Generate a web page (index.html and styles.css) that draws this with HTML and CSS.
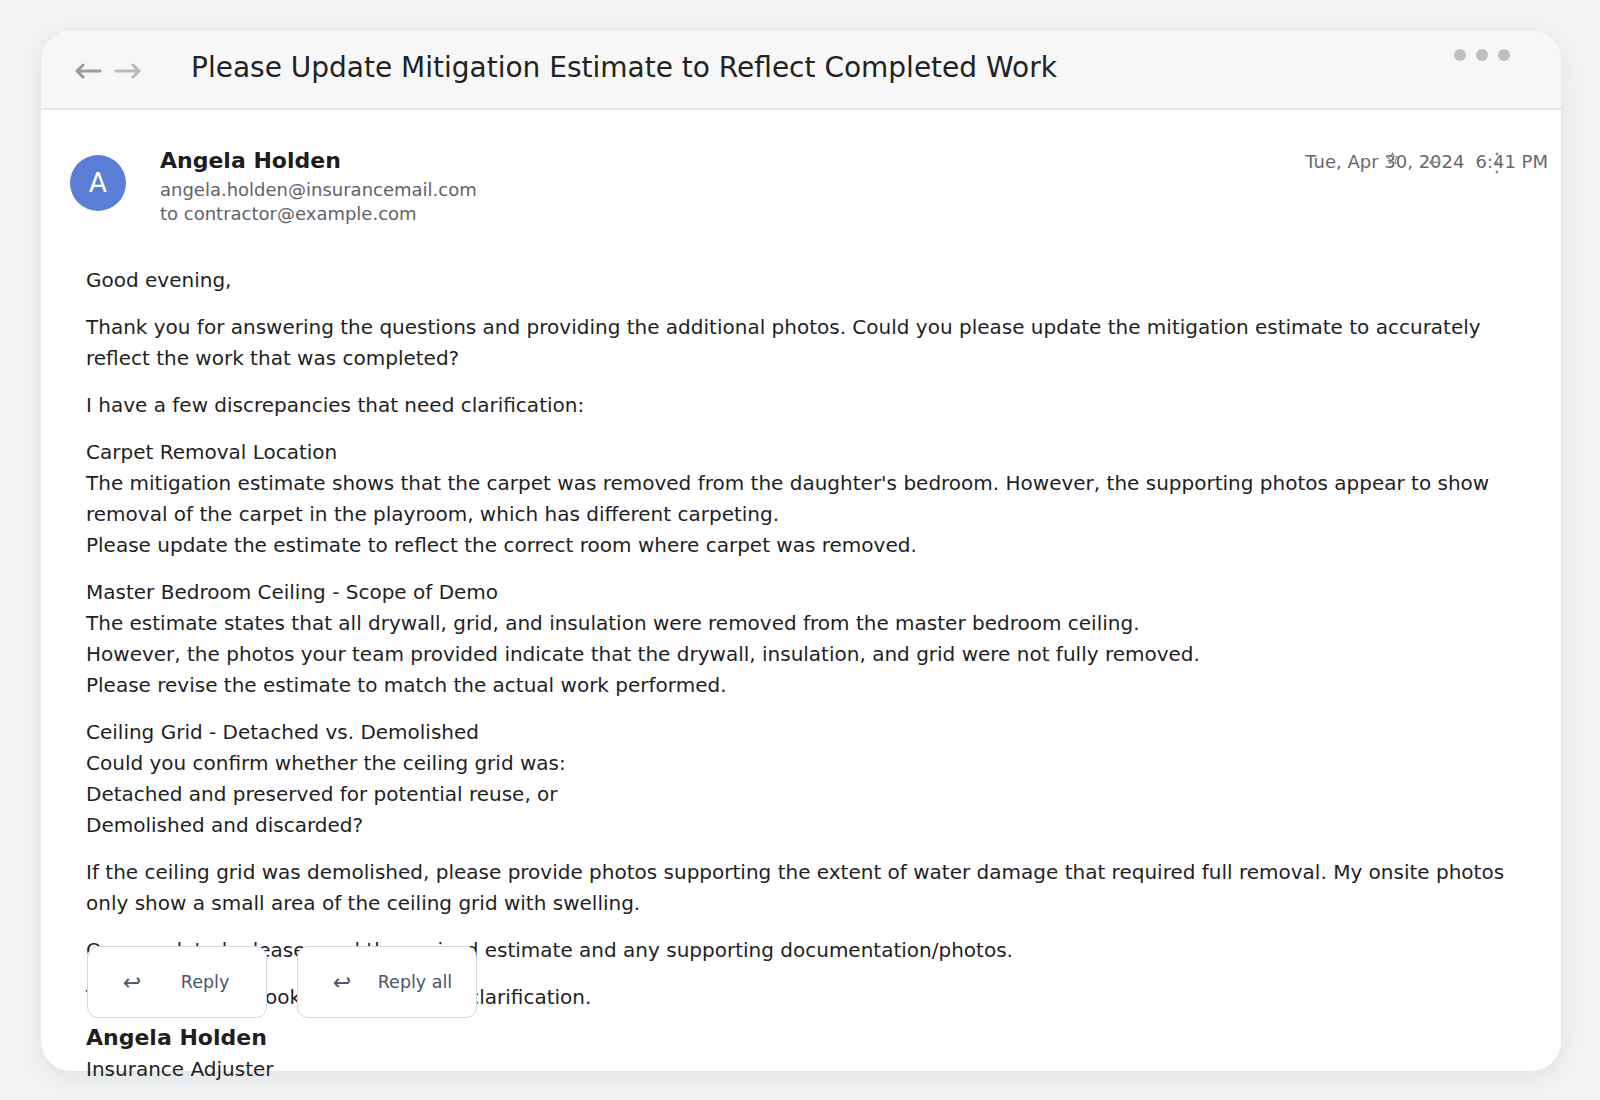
FILE: index.html
```html
<!DOCTYPE html>
<html lang="en">
<head>
<meta charset="utf-8">
<title>Please Update Mitigation Estimate to Reflect Completed Work</title>
<link rel="stylesheet" href="styles.css">
</head>
<body>
<div class="card">
  <header class="topbar">
    <div class="nav">
      <svg class="nav-arrow back" width="28" height="16" viewBox="0 0 28 16"><path d="M26 8H3M9 2L3 8l6 6" fill="none" stroke="currentColor" stroke-width="3" stroke-linecap="round" stroke-linejoin="round"/></svg>
      <svg class="nav-arrow fwd" width="28" height="16" viewBox="0 0 28 16"><path d="M2 8h23M19 2l6 6-6 6" fill="none" stroke="currentColor" stroke-width="3" stroke-linecap="round" stroke-linejoin="round"/></svg>
    </div>
    <h1 class="subject">Please Update Mitigation Estimate to Reflect Completed Work</h1>
    <div class="dots"><span></span><span></span><span></span></div>
  </header>

  <section class="sender">
    <div class="avatar">A</div>
    <div class="sender-info">
      <div class="sender-name">Angela Holden</div>
      <div class="sender-meta">angela.holden@insurancemail.com</div>
      <div class="sender-meta">to contractor@example.com</div>
    </div>
    <div class="date">Tue, Apr 30, 2024<span class="time">6:41 PM</span></div>
    <div class="msg-actions">
      <svg class="act-star" width="13" height="13" viewBox="0 0 12 12"><path d="M6 0.8l1.55 3.35 3.65.4-2.7 2.5.75 3.6L6 8.8 2.75 10.65l.75-3.6-2.7-2.5 3.65-.4z" fill="none" stroke="currentColor" stroke-width="1" stroke-linejoin="round"/></svg>
      <span class="act-reply">↩</span>
      <svg class="act-more" width="4" height="22" viewBox="0 0 4 22"><circle cx="2" cy="2" r="1.4" fill="currentColor"/><circle cx="2" cy="11" r="1.4" fill="currentColor"/><circle cx="2" cy="20" r="1.4" fill="currentColor"/></svg>
    </div>
  </section>

  <article class="message">
    <p>Good evening,</p>
    <p>Thank you for answering the questions and providing the additional photos. Could you please update the mitigation estimate to accurately reflect the work that was completed?</p>
    <p>I have a few discrepancies that need clarification:</p>
    <p>Carpet Removal Location<br>The mitigation estimate shows that the carpet was removed from the daughter's bedroom. However, the supporting photos appear to show removal of the carpet in the playroom, which has different carpeting.<br>Please update the estimate to reflect the correct room where carpet was removed.</p>
    <p>Master Bedroom Ceiling - Scope of Demo<br>The estimate states that all drywall, grid, and insulation were removed from the master bedroom ceiling.<br>However, the photos your team provided indicate that the drywall, insulation, and grid were not fully removed.<br>Please revise the estimate to match the actual work performed.</p>
    <p>Ceiling Grid - Detached vs. Demolished<br>Could you confirm whether the ceiling grid was:<br>Detached and preserved for potential reuse, or<br>Demolished and discarded?</p>
    <p>If the ceiling grid was demolished, please provide photos supporting the extent of water damage that required full removal. My onsite photos only show a small area of the ceiling grid with swelling.</p>
    <p>Once updated, please send the revised estimate and any supporting documentation/photos.</p>
    <p>Thank you, and I look forward to your clarification.</p>
    <div class="signature">
      <div class="sig-name">Angela Holden</div>
      <div class="sig-title">Insurance Adjuster</div>
    </div>
  </article>

  <div class="reply-bar">
    <button class="reply-btn"><span class="reply-icon">↩</span><span class="reply-label">Reply</span></button>
    <button class="reply-btn"><span class="reply-icon">↩</span><span class="reply-label">Reply all</span></button>
  </div>
</div>
</body>
</html>
```

FILE: styles.css
```css
* { box-sizing: border-box; }

html, body {
  margin: 0;
  background: #f1f2f4;
  font-family: "DejaVu Sans", "Noto Sans", sans-serif;
  color: #202124;
}

body {
  padding: 31px 39px 0 41px;
  height: 1100px;
  overflow: hidden;
}

.card {
  position: relative;
  width: 1520px;
  height: 1040px;
  background: #ffffff;
  border-radius: 30px;
  box-shadow: 0 6px 24px rgba(20, 25, 35, 0.07);
}

.topbar {
  display: flex;
  align-items: center;
  height: 79px;
  padding: 0 0 0 33px;
  background: #f7f7f8;
  border-bottom: 2px solid #e3e4e7;
  border-radius: 30px 30px 0 0;
}

.nav {
  display: flex;
  gap: 12px;
  margin-top: 2px;
}

.nav-arrow.back { color: #9c9c9f; }
.nav-arrow.fwd { color: #b9b9bc; }

.subject {
  margin: 0 0 5px 49px;
  font-size: 28px;
  font-weight: 400;
  color: #222222;
  flex: 1;
}

.dots {
  align-self: flex-start;
  display: flex;
  gap: 10px;
  margin: 18px 51px 0 0;
}

.dots span {
  width: 12px;
  height: 12px;
  border-radius: 50%;
  background: #bfbfc3;
}

.sender {
  position: relative;
  display: flex;
  align-items: flex-start;
  padding: 34px 13px 0 29px;
}

.avatar {
  width: 56px;
  height: 56px;
  margin-top: 11px;
  border-radius: 50%;
  background: #5a7dd6;
  color: #ffffff;
  font-size: 26px;
  display: flex;
  align-items: center;
  justify-content: center;
}

.sender-info {
  margin-left: 34px;
  flex: 1;
}

.sender-name {
  font-size: 22px;
  font-weight: 700;
  line-height: 34px;
  color: #1d1d1f;
}

.sender-meta {
  font-size: 18px;
  line-height: 24px;
  color: #5f6368;
}

.date {
  font-size: 18px;
  line-height: 36px;
  color: #666a70;
}

.date .time { margin-left: 11px; }

.msg-actions {
  position: absolute;
  top: 42px;
  left: 1345px;
  display: flex;
  align-items: flex-start;
  color: #8a8c91;
}

.act-star { display: block; }

.act-reply {
  width: 13px;
  margin: 3px 0 0 29px;
  font-size: 15px;
  line-height: 15px;
  text-align: center;
}

.act-more {
  display: block;
  margin: 0 0 0 54px;
}

.message {
  padding: 39px 46px 0 45px;
  font-size: 20px;
  line-height: 31px;
  color: #1f1f1f;
}

.message p { margin: 0 0 16px; }

.sig-name {
  font-size: 22px;
  font-weight: 700;
  line-height: 20px;
  margin-top: -1px;
}

.sig-title {
  margin-top: 6px;
}

.reply-bar {
  position: absolute;
  left: 46px;
  bottom: 53px;
  display: flex;
  gap: 30px;
}

.reply-btn {
  display: grid;
  grid-template-columns: 60px 1fr;
  align-items: center;
  width: 180px;
  height: 72px;
  padding: 0 18px 0 14px;
  background: #ffffff;
  border: 1.5px solid #d3d6db;
  border-radius: 11px;
  font-family: "DejaVu Sans", sans-serif;
  font-size: 17.5px;
  color: #4a5568;
  text-align: center;
}

.reply-icon { font-size: 22px; }
```
